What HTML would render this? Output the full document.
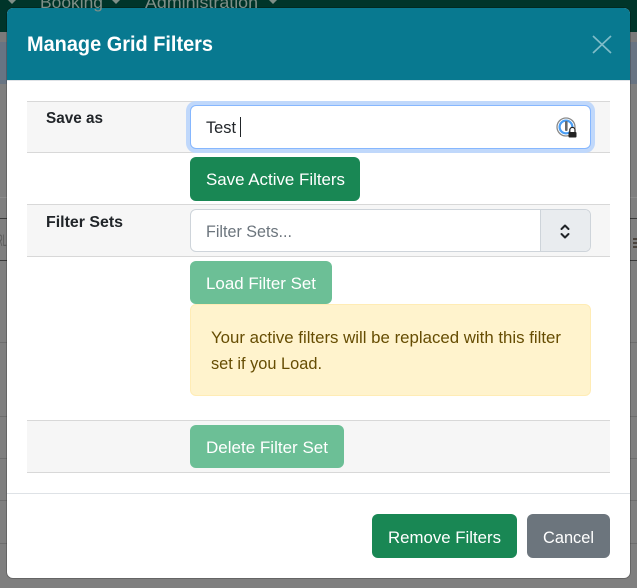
<!DOCTYPE html>
<html><head><meta charset="utf-8"><style>
html,body{margin:0;padding:0;background:#7f7f7f;overflow:hidden}
#p{position:relative;width:637px;height:588px;overflow:hidden;background:#7f7f7f}
.a{position:absolute;box-sizing:border-box}
.l{position:absolute;height:1px;left:0;width:637px;background:#6e6e6e}
.d{background:#3a3a3a}
.r{position:absolute;left:27px;width:583px;box-sizing:border-box;border-top:1px solid #d8d8d8;border-bottom:1px solid #d8d8d8}
svg{position:absolute;left:0;top:0}
text{font-family:"Liberation Sans",sans-serif}
</style></head><body><div id="p">
<div class="a" style="left:0;top:0;width:637px;height:32px;background:#00352a"></div>
<div class="a" style="left:0;top:32px;width:637px;height:10px;background:#7a7a7a"></div>
<div class="a" style="left:0;top:42px;width:637px;height:42px;background:#687483"></div>
<div class="l" style="top:197px;background:#8c8c8c"></div>
<div class="l d" style="top:218px"></div>
<div class="l d" style="top:260px"></div>
<div class="l" style="top:342px"></div>
<div class="l" style="top:416px"></div>
<div class="l" style="top:458px"></div>
<div class="l" style="top:500px"></div>
<div class="l" style="top:543px"></div>
<div class="a" style="left:7px;top:8px;width:623px;height:570px;background:#fff;border-radius:6px;box-shadow:0 0 0 1px rgba(0,0,0,.2);overflow:hidden">
<div class="a" style="left:0;top:0;width:623px;height:72px;background:#087990"></div>
<div class="a" style="left:0;top:72px;width:623px;height:1px;background:#dee2e6"></div>
<div class="a" style="left:0;top:485px;width:623px;height:1px;background:#dee2e6"></div>
</div>
<div class="r" style="top:101px;height:52px;background:#f6f6f6"></div>
<div class="r" style="top:204px;height:53px;background:#f6f6f6"></div>
<div class="r" style="top:420px;height:53px;background:#f6f6f6"></div>
<div class="a" style="left:190px;top:105px;width:401px;height:44px;background:#fff;border:1px solid #86b7fe;border-radius:6px;box-shadow:0 0 0 4px #c0d8fb"></div>
<div class="a" style="left:190px;top:157px;width:170px;height:44px;background:#198754;border-radius:6px"></div>
<div class="a" style="left:190px;top:209px;width:401px;height:43px;background:#fff;border:1px solid #ced4da;border-radius:6px;overflow:hidden"><div class="a" style="right:0;top:0;width:50px;height:41px;background:#e9ecef;border-left:1px solid #ced4da"></div></div>
<div class="a" style="left:190px;top:261px;width:142px;height:43px;background:#6cbf96;border-radius:6px"></div>
<div class="a" style="left:190px;top:304px;width:401px;height:92px;background:#fff3cd;border:1px solid #ffecb5;border-radius:6px"></div>
<div class="a" style="left:190px;top:425px;width:154px;height:43px;background:#6cbf96;border-radius:6px"></div>
<div class="a" style="left:372px;top:514px;width:145px;height:44px;background:#198754;border-radius:6px"></div>
<div class="a" style="left:527px;top:514px;width:83px;height:44px;background:#6c757d;border-radius:6px"></div>
<svg width="637" height="588" viewBox="0 0 637 588">
<g fill="#7f8f88" font-size="17">
<text x="40" y="8" textLength="63" lengthAdjust="spacingAndGlyphs">Booking</text>
<text x="145" y="8" textLength="113" lengthAdjust="spacingAndGlyphs">Administration</text>
<path d="M8 0h8l-4 4zM112 0h8l-4 4zM269 0h8l-4 4z"/>
</g>
<text x="-3" y="246" font-size="17" fill="#5c5c5c" textLength="10" lengthAdjust="spacingAndGlyphs">RL</text>
<path d="M633 239h4M633 243h4M633 247h4" stroke="#3a3128" stroke-width="1.6"/>
<text x="27" y="51" font-size="21" font-weight="700" fill="#fff" textLength="186" lengthAdjust="spacingAndGlyphs">Manage Grid Filters</text>
<path d="M593 36L611 53M611 36L593 53" stroke="#7fbcc8" stroke-width="1.7" fill="none"/>
<text x="46" y="123" font-size="16" font-weight="700" fill="#212529" textLength="57" lengthAdjust="spacingAndGlyphs">Save as</text>
<text x="206" y="133" font-size="17" fill="#212529" textLength="30" lengthAdjust="spacingAndGlyphs">Test</text>
<rect x="240" y="117" width="1" height="20" fill="#212529"/>
<circle cx="566" cy="127" r="9" fill="none" stroke="#8a8a8a" stroke-width="1.3"/>
<circle cx="566" cy="127" r="6.400" fill="none" stroke="#4a9ef5" stroke-width="2.200"/>
<rect x="565" y="121" width="2.600" height="10" rx="1" fill="#6a6a6a"/>
<path d="M569.800 132v-2a2.600 2.600 0 0 1 5.200 0v2" fill="#fff" stroke="#222" stroke-width="1.200"/>
<rect x="568.500" y="132" width="8" height="5.500" rx="1" fill="#222"/>
<text x="206" y="185" font-size="17" fill="#fff" textLength="139" lengthAdjust="spacingAndGlyphs">Save Active Filters</text>
<text x="46" y="227" font-size="16" font-weight="700" fill="#212529" textLength="77" lengthAdjust="spacingAndGlyphs">Filter Sets</text>
<text x="206" y="237" font-size="17" fill="#6c757d" textLength="86" lengthAdjust="spacingAndGlyphs">Filter Sets...</text>
<path d="M561.500 229L565 225.500L568.500 229M561.500 234L565 237.500L568.500 234" fill="none" stroke="#212529" stroke-width="2" stroke-linecap="round" stroke-linejoin="round"/>
<text x="206" y="289" font-size="17" fill="#fff" textLength="110" lengthAdjust="spacingAndGlyphs">Load Filter Set</text>
<text x="211" y="343" font-size="17" fill="#664d03" textLength="350" lengthAdjust="spacingAndGlyphs">Your active filters will be replaced with this filter</text>
<text x="211" y="369" font-size="17" fill="#664d03" textLength="111" lengthAdjust="spacingAndGlyphs">set if you Load.</text>
<text x="206" y="453" font-size="17" fill="#fff" textLength="122" lengthAdjust="spacingAndGlyphs">Delete Filter Set</text>
<text x="388" y="543" font-size="17" fill="#fff" textLength="113" lengthAdjust="spacingAndGlyphs">Remove Filters</text>
<text x="543" y="543" font-size="17" fill="#fff" textLength="51" lengthAdjust="spacingAndGlyphs">Cancel</text>
</svg>
</div></body></html>
